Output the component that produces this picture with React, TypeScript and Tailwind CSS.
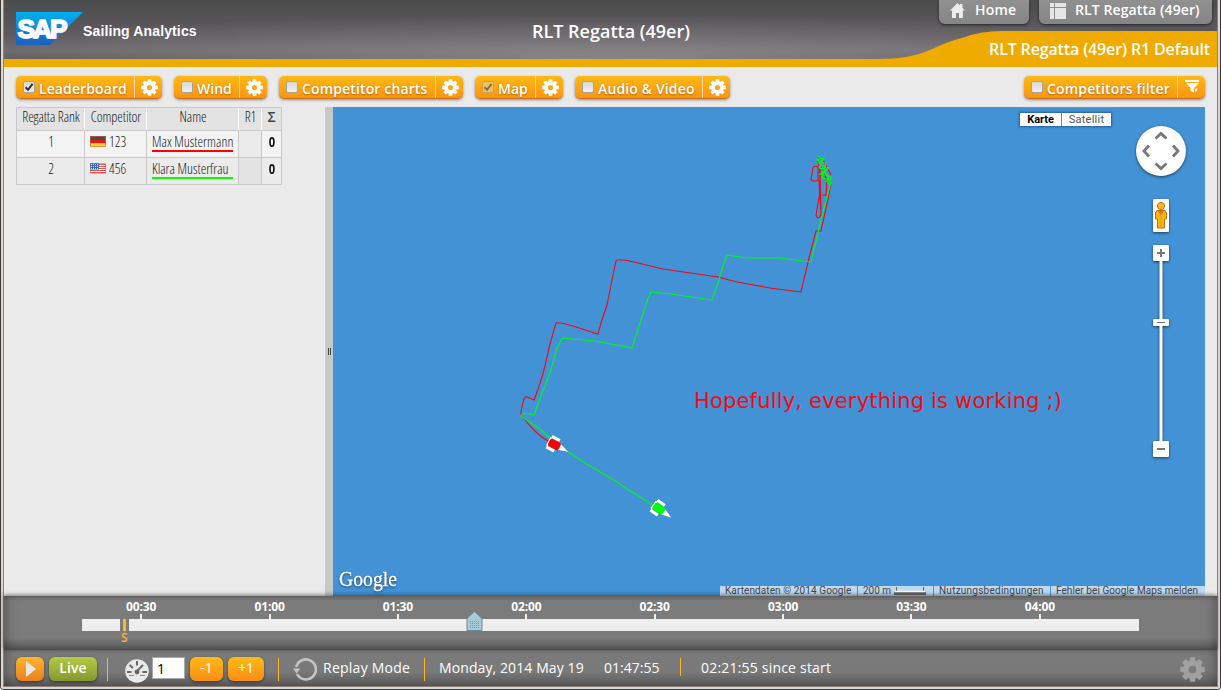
import React from "react";

const INK = "font-['Open_Sans','Noto_Sans',sans-serif]";

function Gear({ className, fill, hole }: { className: string; fill: string; hole: string }) {
  const teeth = [0, 45, 90, 135, 180, 225, 270, 315];
  return (
    <svg viewBox="-10 -10 20 20" className={className}>
      {teeth.map((a) => (
        <path key={a} d="M-2.6 -5 L-2 -9.8 H2 L2.6 -5Z" fill={fill} transform={`rotate(${a})`} />
      ))}
      <circle r="7.3" fill={fill} />
      <circle r="3" fill={hole} />
    </svg>
  );
}

function Funnel() {
  return (
    <svg viewBox="0 0 15 14" className="ml-px h-[14px] w-[15px]">
      <path d="M0 0H14V2H0ZM1 3H14L9 8V13L5.5 10.5V8Z" fill="#fff" />
      <path d="M10 9.5l2 -1.5v3.5h-2z" fill="#fff" />
    </svg>
  );
}

function Check({ on, dim }: { on?: boolean; dim?: boolean }) {
  return (
    <span
      className={
        "flex h-[12px] w-[12px] shrink-0 items-center justify-center rounded-[2px] border " +
        (dim ? "border-[#c9a052] bg-[#ecc169]" : "border-[#a5a39f] bg-linear-to-b from-[#d8d8d8] to-[#efefef]")
      }
    >
      {on && (
        <svg viewBox="0 0 10 10" className="h-[10px] w-[10px]">
          <path d="M1.6 5.2L4 7.8L8.6 1.8" fill="none" stroke={dim ? "#8d7038" : "#333"} strokeWidth="2" />
        </svg>
      )}
    </span>
  );
}

type ToggleProps = { label: string; left: string; text: string; on?: boolean; dim?: boolean; funnel?: boolean };

function Toggle({ label, left, text, on, dim, funnel }: ToggleProps) {
  return (
    <div className="flex h-[23px] overflow-hidden rounded-[5px] border-b border-[#c9701b] bg-linear-to-b from-[#fdb913] to-[#fb9413] shadow-[0_1px_3px_rgba(0,0,0,0.4)]">
      <div className={"flex items-start border-r border-[#f3d9a5] pt-[5px] pl-[7px] " + left}>
        <Check on={on} dim={dim} />
        <span className={"ml-[4px] text-[14px] leading-[16px] font-semibold whitespace-nowrap text-white [text-shadow:0_1px_2px_rgba(120,60,0,0.55)] " + text}>
          {label}
        </span>
      </div>
      <div className="flex w-[27px] items-start justify-center pt-[4px]">
        {funnel ? <Funnel /> : <Gear className="-mt-px ml-px h-[17px] w-[17px]" fill="#fff" hole="#fbaa13" />}
      </div>
    </div>
  );
}

function NavTab({ children, className }: { children: React.ReactNode; className: string }) {
  return (
    <div className={"flex h-[24px] rounded-b-[6px] bg-linear-to-b from-[#919191] to-[#858585] text-[14px] leading-[20px] font-semibold whitespace-nowrap text-white shadow-[0_1px_3px_rgba(0,0,0,0.6)] " + className}>
      {children}
    </div>
  );
}

function Header() {
  return (
    <header className="relative flex h-[67px] shrink-0 border-b-[8px] border-[#f0ab00] bg-[radial-gradient(ellipse_60%_75%_at_50%_100%,rgba(145,143,146,0.8),rgba(145,143,146,0)),linear-gradient(to_bottom,#4c4c4c,#605c60_65%,#6b676b_85%,#5b585b)]">
      <svg viewBox="0 0 67 33" className="mt-[12px] ml-[12px] h-[33px] w-[67px] shrink-0">
        <defs>
          <linearGradient id="sap" x1="0" y1="0" x2="0" y2="1">
            <stop offset="0" stopColor="#00b0f0" />
            <stop offset="1" stopColor="#1d5dbd" />
          </linearGradient>
        </defs>
        <path d="M0 0H67L34 33H0Z" fill="url(#sap)" />
        <text x="1.5" y="26" textLength="48" lengthAdjust="spacingAndGlyphs" fill="#fff" stroke="#fff" strokeWidth="1.7" fontFamily="Liberation Sans" fontWeight="700" fontSize="26" letterSpacing="-2">
          SAP
        </text>
      </svg>
      <span className="mt-[22px] w-[114px] font-['Liberation_Sans',sans-serif] text-[14px] leading-[18px] font-bold tracking-[0.13px] whitespace-nowrap text-white">Sailing Analytics</span>
      <h1 className="mt-[19px] ml-[335px] text-[18px] leading-[24px] font-semibold whitespace-nowrap text-white">RLT Regatta (49er)</h1>
      <div className="absolute top-[31px] right-0 flex h-[28px] w-[340px] justify-end">
        <svg viewBox="0 0 340 28" className="absolute inset-0 h-[28px] w-[340px]">
          <path d="M0 28C50 28 55 14 85 7Q103 0 125 0H340V28Z" fill="#f0ab00" />
        </svg>
        <span className="relative mt-[6px] mr-[7px] text-[16px] leading-[24px] font-semibold tracking-[-0.14px] whitespace-nowrap text-white">RLT Regatta (49er) R1 Default</span>
      </div>
      <nav className="absolute top-0 right-[5px] flex gap-[10px]">
        <NavTab className="w-[90px]">
          <svg viewBox="0 0 15 15" className="mt-[3px] ml-[11px] h-[15px] w-[15px]">
            <path d="M7.5 0L10 2.5V1H12.5V5L15 7.5H12.8V15H9V10H6V15H2V7.5H0Z" fill="#eee" />
          </svg>
          <span className="ml-[10px] tracking-[0.2px]">Home</span>
        </NavTab>
        <NavTab className="w-[173px]">
          <svg viewBox="0 0 16 16" className="mt-[3px] ml-[11px] h-[16px] w-[16px]">
            <path d="M0 0H4V4H0ZM5 0H16V4H5ZM0 5H4V16H0ZM5 5H16V16H5Z" fill="#e6e6e6" />
          </svg>
          <span className="ml-[9px] tracking-[0.1px]">RLT Regatta (49er)</span>
        </NavTab>
      </nav>
    </header>
  );
}

function Flag({ us }: { us?: boolean }) {
  return us ? (
    <svg viewBox="0 0 16 11" className="h-[11px] w-[16px]">
      <path d="M0 0H16V11H0Z" fill="#fff" />
      <path d="M8 1.5H16M8 3.5H16M0 7.5H16M0 9.5H16M8 5.5H16" stroke="#ef5350" />
      <path d="M0 0H9V6.5H0Z" fill="#2f6fd0" />
      <path d="M1 1.5H9M1 3.5H9M1 5.5H9" stroke="#c9dcf8" strokeDasharray="1 1" />
      <path d="M.5 .5H15.5V10.5H.5Z" fill="none" stroke="#b76b66" strokeOpacity=".55" />
    </svg>
  ) : (
    <svg viewBox="0 0 16 11" className="h-[11px] w-[16px]">
      <path d="M0 0H16V4H0Z" fill="#4b4a48" />
      <path d="M0 4H16V7.5H0Z" fill="#e01b12" />
      <path d="M0 7.5H16V11H0Z" fill="#fbd13a" />
      <path d="M.5 .5H15.5V10.5H.5Z" fill="none" stroke="#c06a48" strokeOpacity=".6" />
    </svg>
  );
}

const cell = "flex items-start justify-center overflow-hidden border-r border-b border-[#c8c8c8]";
const thin = "block shrink-0 whitespace-nowrap text-[14px] leading-[20px] font-light text-[#222] [font-stretch:75%]";

function Row({ rank, us, num, name, line, bg, track }: { rank: string; us?: boolean; num: string; name: string; line: string; bg: string; track: string }) {
  return (
    <div className={"grid h-[27px] grid-cols-[68px_62px_92px_23px_20px] " + bg}>
      <div className={cell}>
        <span className={thin + " mt-px ml-px"}>{rank}</span>
      </div>
      <div className={cell + " justify-start! pl-[5px]"}>
        <span className="mt-[5px]">
          <Flag us={us} />
        </span>
        <span className={thin + " mt-px ml-[3px]"}>{num}</span>
      </div>
      <div className={cell}>
        <span className={thin + " mt-px h-[20px] w-[81px] border-b-2 " + track + " " + line}>{name}</span>
      </div>
      <div className={cell + " bg-black/3"} />
      <div className={cell}>
        <span className="mt-px ml-px scale-x-80 text-[14px] leading-[20px] font-bold text-[#111]">0</span>
      </div>
    </div>
  );
}

function Leaderboard() {
  return (
    <div className="h-[78px] w-[266px] border-t border-l border-[#c8c8c8]">
      <div className="grid h-[23px] grid-cols-[68px_62px_92px_23px_20px] bg-[#e3e3e3]">
        {["Regatta Rank", "Competitor", "Name", "R1"].map((h) => (
          <div key={h} className={cell + " border-r-white"}>
            <span className={thin + " mt-[-1px] ml-px tracking-[-0.08px]"}>{h}</span>
          </div>
        ))}
        <div className={cell}>
          <span className="text-[14px] leading-[18px] font-semibold text-[#444]">Σ</span>
        </div>
      </div>
      <Row rank="1" num="123" name="Max Mustermann" line="border-[#ff0000]" bg="bg-[#f3f3f3]" track="tracking-[0.03px]" />
      <Row rank="2" us num="456" name="Klara Musterfrau" line="border-[#00ff00]" bg="bg-[#ebebeb]" track="tracking-[0px]" />
    </div>
  );
}

function Boat({ x, y, r, c }: { x: number; y: number; r: number; c: string }) {
  return (
    <g transform={`translate(${x} ${y}) rotate(${r})`}>
      <path d="M6 -3.4L16.5 0L6 3.4Z M-5 -7.5H4V-4.5H-5Z M-5 4.5H4V7.5H-5Z M-6 -4.5H-4V4.5H-6Z" fill="#fff" />
      <rect x="-5" y="-4" width="12" height="8" rx="2" fill={c} />
    </g>
  );
}

function RaceMap() {
  return (
    <section className="relative h-[489px] w-[872px] shrink-0 overflow-hidden bg-[#4492d6]">
      <svg viewBox="333 107 872 489" className="absolute inset-0 h-[489px] w-[872px]">
        <g fill="none" stroke="#f00814" strokeWidth="1.1">
          <path d="M553 443Q544 440 535 431Q528 424 521 415Q521 409 524 399Q525 396 527 397Q530 398 534 400Q540 385 545 366Q549 345 556 323Q558 322 573 326L598 334Q600 325 607 305L611 285L616 261Q617 258 634 262L663 269L718 277L737 282L770 288L801 292L809 258L816 231H821Q829 195 831 184" />
          <path d="M811 180L813 168Q814 165 818 167V180Q815 182 811 180M818 160Q821 175 820 192L816 215Q817 219 820 217L821 214L819 180M821 166Q829 178 826 195H822M820 169L821 210" />
          <path d="M817 157L823 160L831 175" />
        </g>
        <g fill="none" stroke="#00fa14" strokeWidth="1.1">
          <path d="M658 508L635 494L609 477L590 466L568 452L541 430Q530 422 521 416Q522 411 534 415Q540 397 549 376L557 348L562 338L595 341L632 348L641 320L646 305Q647 300 651 292L671 294L712 300L719 280Q722 267 727 255L747 258L780 258L811 262L821 220L831 182" />
          <path d="M817 156L822 159L821 165L829 168L823 172L832 178L826 181L831 185M816 160L824 158L819 168L827 170L820 174L829 176M818 163L826 163L822 178L831 180M817 158L831 183" />
        </g>
        <Boat x={553.5} y={444} r={28} c="#ff0000" />
        <Boat x={658} y={508} r={36} c="#00ff00" />
        <text x="694" y="408" textLength="368" fill="#f50a10" fontFamily="DejaVu Sans" fontSize="21">
          Hopefully, everything is working ;)
        </text>
        <text x="339" y="586" textLength="58" lengthAdjust="spacingAndGlyphs" fill="#fff" stroke="#fff" strokeWidth=".3" fontFamily="Liberation Serif" fontSize="20" style={{ filter: "drop-shadow(0 1px 1px rgba(0,0,0,.5))" }}>
          Google
        </text>
      </svg>
      <div className="absolute top-[6px] left-[687px] flex h-[13px] font-[Roboto,sans-serif] text-[11px] leading-[14px] shadow-[0_0_2px_1px_rgba(20,60,110,0.6)]">
        <span className="w-[41px] bg-white text-center font-bold tracking-[-0.05px] text-black">Karte</span>
        <span className="ml-px w-[49px] bg-white text-center tracking-[0.25px] text-[#565656]">Satellit</span>
      </div>
      <svg viewBox="1130 120 64 344" className="absolute top-[13px] left-[797px] h-[344px] w-[64px]">
        <g style={{ filter: "drop-shadow(0 1px 1.5px rgba(0,0,0,.6))" }}>
          <circle cx="1161" cy="151" r="25" fill="#fff" />
          <rect x="1153" y="199" width="16" height="33" rx="1" fill="#fff" />
          <rect x="1159.5" y="260" width="3" height="182" fill="#fff" />
          <rect x="1153" y="245" width="16" height="16" rx="1" fill="#fff" />
          <rect x="1153" y="319" width="16" height="7" rx="1" fill="#fff" />
          <rect x="1153" y="441" width="16" height="16" rx="1" fill="#fff" />
        </g>
        <path d="M1155.5 138.5L1161 133.5L1166.5 138.5M1155.5 163.5L1161 168.5L1166.5 163.5M1149 145.5L1144 151L1149 156.5M1173 145.5L1178 151L1173 156.5" fill="none" stroke="#777" strokeWidth="2.8" />
        <path d="M1157 253H1165M1161 249V257M1157 449H1165" stroke="#777" strokeWidth="2" />
        <path d="M1157 322.5H1165" stroke="#777" />
        <path d="M1157 210.5H1165L1166.5 213V219H1164.5V228H1157.5V219H1155.5V213Z" fill="#fbb800" stroke="#b9720f" />
        <path d="M1158 211H1164L1161 215.5Z" fill="#e8665c" />
        <path d="M1161 216V227" stroke="#dc9a08" />
        <circle cx="1161" cy="206" r="3.6" fill="#fcb52c" stroke="#bd7411" />
      </svg>
      <div className="absolute right-0 bottom-0 flex h-[10px] gap-px overflow-hidden font-[Roboto,sans-serif] text-[10px] leading-[9px] whitespace-nowrap text-[#444]">
        <span className="w-[137px] bg-white/65 pl-[5px] tracking-[0.1px]">Kartendaten © 2014 Google</span>
        <span className="flex w-[75px] bg-white/65 pl-[5px]">
          200 m
          <svg viewBox="0 0 32 8" className="mt-px ml-[3px] h-[8px] w-[32px]">
            <path d="M1.5 0V6.5H30.5V0" fill="none" stroke="#666" strokeWidth="3" />
            <path d="M1 0V4.5H31V0" fill="none" stroke="#fff" strokeWidth="1.4" />
          </svg>
        </span>
        <span className="w-[116px] bg-white/65 pl-[5px] tracking-[0.24px]">Nutzungsbedingungen</span>
        <span className="w-[154px] bg-white/65 pl-[5px] tracking-[0.07px]">Fehler bei Google Maps melden</span>
      </div>
    </section>
  );
}

const times = ["00:30", "01:00", "01:30", "02:00", "02:30", "03:00", "03:30", "04:00"];

function Timeline() {
  return (
    <div className="relative h-[54px] shrink-0 bg-[linear-gradient(to_bottom,#686868,#7b7b7b_5px,#7b7b7b_42px,#555_53px,#505050)] shadow-[0_-1px_4px_rgba(0,0,0,0.5),inset_10px_0_12px_-8px_rgba(0,0,0,0.3),inset_-10px_0_12px_-8px_rgba(0,0,0,0.3)]">
      <div className="ml-[73px] grid h-[23px] w-[1027px] grid-cols-8">
        {times.map((t) => (
          <div key={t} className="flex flex-col items-center">
            <span className="h-[18px] pt-[3px] text-[12px] leading-[16px] font-bold tracking-[-0.1px] text-white">{t}</span>
            <span className="h-[5px] w-[2px] bg-[#eee]" />
          </div>
        ))}
      </div>
      <div className="ml-[78px] flex h-[12px]">
        <span className="w-[38px] bg-[#eee]" />
        <span className="ml-[3px] w-[3px] bg-[#fdb521]" />
        <span className="ml-[3px] w-[1010px] bg-[#eee]" />
      </div>
      <span className="ml-[117px] block text-[12px] leading-[13px] font-semibold text-[#fdb521]">S</span>
      <svg viewBox="0 0 18 22" className="absolute top-[14px] left-[462px] h-[22px] w-[18px]">
        <path d="M1 8.5L8.5 1.5L16 8.5V20.5H1Z" fill="#a6ccd9" stroke="#6c8993" />
        <path d="M4 11.5H13M4 13.5H13M4 15.5H13M4 17.5H13" stroke="#7693a0" strokeDasharray="1 1" />
      </svg>
    </div>
  );
}

function Btn({ children, className }: { children: React.ReactNode; className: string }) {
  return (
    <button className={"flex h-[24px] items-center justify-center rounded-[6px] pb-[2px] text-[14px] font-semibold text-white shadow-[0_1px_3px_rgba(0,0,0,0.5)] " + className}>
      {children}
    </button>
  );
}

const orange = "bg-linear-to-b from-[#fdbb16] to-[#f98d14]";

function Controls() {
  const rule = "mt-px w-px bg-[#fdb521]";
  return (
    <footer className="flex h-[36px] shrink-0 items-start bg-[linear-gradient(to_bottom,#7b7b7b,#797979_22px,#575757)] pt-[7px] text-[14px] leading-[22px] whitespace-nowrap text-white shadow-[inset_10px_0_12px_-8px_rgba(0,0,0,0.3),inset_-10px_0_12px_-8px_rgba(0,0,0,0.3)]">
      <Btn className="ml-[12px] w-[28px] bg-linear-to-b from-[#fcb62c] to-[#ea7e1f]">
        <svg viewBox="0 0 10 16" className="mt-[2px] ml-[2px] h-[16px] w-[10px]">
          <path d="M0 0L10 8L0 16Z" fill="#e9e7e3" />
        </svg>
      </Btn>
      <Btn className="ml-[5px] w-[48px] bg-linear-to-b from-[#b5ca45] to-[#86982f] tracking-[0.1px]">Live</Btn>
      <i className={rule + " ml-[10px] h-[23px]"} />
      <svg viewBox="-12 -12 24 24" className="mt-[2px] ml-[17px] h-[24px] w-[24px]">
        <circle r="11.8" fill="#e9e9e9" />
        <path d="M-10 1H-5.5M5.5 1H10M-7.5 -6L-4 -3M0 -10V-5.5M-1 1L6 -6" stroke="#666" strokeWidth="2" />
        <circle cx="0" cy="1" r="2.4" fill="#666" />
        <path d="M-8 4.5H-3M3 4.5H8" stroke="#888" />
      </svg>
      <span className="ml-[3px] h-[22px] w-[33px] border border-[#aaa] bg-white pl-[4px] leading-[22px] text-black">1</span>
      <Btn className={"ml-[5px] w-[33px] font-normal! " + orange}>-1</Btn>
      <Btn className={"ml-[5px] w-[36px] font-normal! " + orange}>+1</Btn>
      <i className={rule + " ml-[14px] h-[23px]"} />
      <svg viewBox="0 0 24 24" className="mr-px ml-[14px] h-[24px] w-[24px]">
        <path d="M4 17A10 10 0 1 0 3.2 10" fill="none" stroke="#c4c4c4" strokeWidth="2.6" />
        <path d="M0 11.5H7.5L3.6 16.5Z" fill="#c4c4c4" />
      </svg>
      <span className="ml-[5px] w-[101px] tracking-[0.25px]">Replay Mode</span>
      <i className={rule + " h-[23px]"} />
      <span className="ml-[14px] w-[165px] tracking-[0.1px]">Monday, 2014 May 19</span>
      <span className="w-[76px]">01:47:55</span>
      <i className={rule + " h-[18px]"} />
      <span className="ml-[20px] tracking-[0.2px]">02:21:55 since start</span>
      <Gear className="mr-[12px] ml-auto h-[25px] w-[25px]" fill="#a0a0a0" hole="#7b7b7b" />
    </footer>
  );
}

export default function App() {
  return (
    <div className={"h-[690px] w-[1221px] overflow-hidden rounded-b-[4px] border-r border-b border-l border-[#3c3a38] " + INK}>
      <div className="h-[689px] border-r-2 border-b-2 border-l-2 border-[#ddd6cf]">
        <div className="flex h-[687px] flex-col border-r border-b border-l border-[#8b817a] bg-[#eaeaea]">
          <Header />
          <div className="flex h-[40px] shrink-0 items-start gap-[12px] pt-[9px] pr-[12px] pl-[12px]">
            <Toggle label="Leaderboard" on left="w-[119px]" text="tracking-[0.1px]" />
            <Toggle label="Wind" left="w-[66px]" text="" />
            <Toggle label="Competitor charts" left="w-[157px]" text="tracking-[0.14px]" />
            <Toggle label="Map" on dim left="w-[61px]" text="" />
            <Toggle label="Audio & Video" left="w-[128px]" text="tracking-[0.13px]" />
            <div className="ml-auto">
              <Toggle label="Competitors filter" funnel left="w-[154px]" text="tracking-[0.16px]" />
            </div>
          </div>
          <main className="flex h-[489px] shrink-0">
            <aside className="w-[321px] shrink-0 pl-[12px]">
              <Leaderboard />
            </aside>
            <div className="flex w-[8px] shrink-0 items-center justify-center gap-px bg-[#c8c8c8]">
              <i className="h-[7px] w-px bg-[#444]" />
              <i className="h-[7px] w-px bg-[#444]" />
            </div>
            <RaceMap />
          </main>
          <Timeline />
          <Controls />
        </div>
      </div>
    </div>
  );
}
